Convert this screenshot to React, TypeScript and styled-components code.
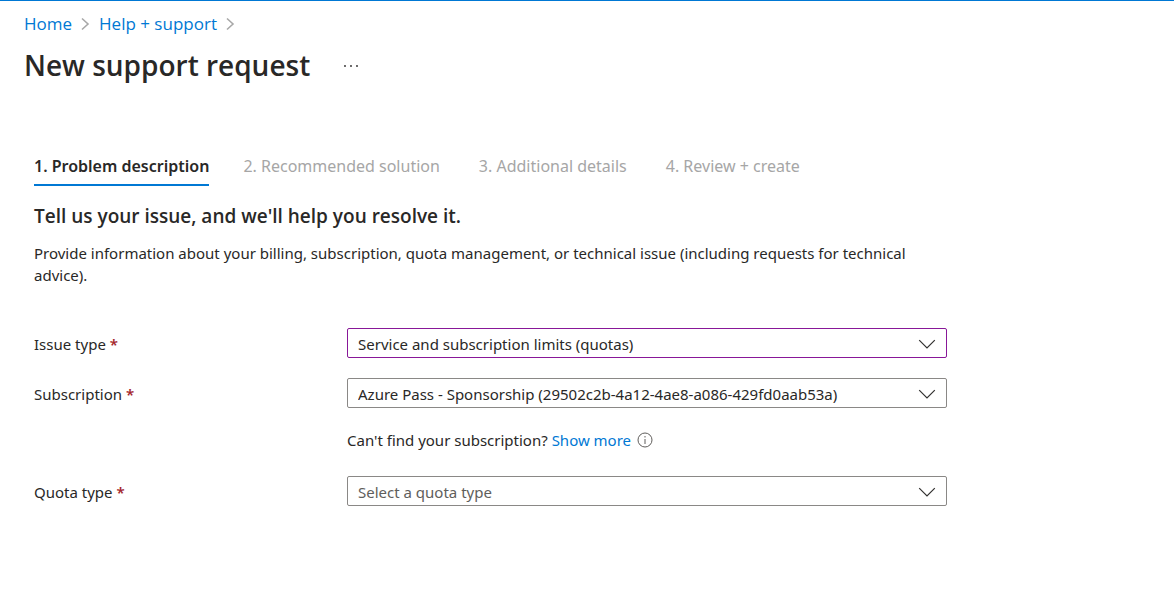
import React from "react";
import styled, { createGlobalStyle } from "styled-components";

const GlobalStyle = createGlobalStyle`
  * { box-sizing: border-box; }
  body {
    margin: 0;
    background: #ffffff;
    color: #292827;
    font-family: "Segoe UI", "Noto Sans", "Open Sans", sans-serif;
    font-size: 15px;
    line-height: 22px;
  }
`;

const Page = styled.div`
  min-height: 100vh;
  border-top: 1px solid #0078d4;
`;

const Header = styled.header`
  padding: 11px 24px 0;
`;

const Breadcrumb = styled.nav`
  display: flex;
  align-items: center;
  gap: 8px;
  font-family: "Segoe UI", "Open Sans", sans-serif;
  font-size: 17px;
  line-height: 24px;
`;

const Link = styled.a`
  color: #0078d4;
  text-decoration: none;
  &:hover { text-decoration: underline; }
`;

const TitleRow = styled.div`
  display: flex;
  align-items: center;
  gap: 33px;
  padding-top: 9px;
`;

const Title = styled.h1`
  margin: 0;
  font-family: "Segoe UI", "Open Sans", sans-serif;
  font-size: 28px;
  font-weight: 600;
  line-height: 40px;
`;

const MoreButton = styled.button`
  display: flex;
  padding: 2px 0 0;
  border: 0;
  background: none;
  color: #292827;
  cursor: pointer;
`;

const Main = styled.main`
  padding: 69px 34px 40px;
`;

const Tabs = styled.div`
  display: flex;
  gap: 29px;
`;

const Tab = styled.button<{ $active?: boolean }>`
  padding: ${(p) => (p.$active ? "0 0 6px" : "0 5px 6px")};
  border: 0;
  border-bottom: 2px solid ${(p) => (p.$active ? "#0078d4" : "transparent")};
  background: none;
  color: ${(p) => (p.$active ? "#292827" : "#a6a6a6")};
  font-family: inherit;
  font-size: 16px;
  font-weight: ${(p) => (p.$active ? 600 : 400)};
  line-height: 24px;
  white-space: nowrap;
`;

const Heading = styled.h2`
  margin: 18px 0 0;
  font-family: "Segoe UI", "Open Sans", sans-serif;
  font-size: 19px;
  font-weight: 600;
  line-height: 24px;
`;

const Intro = styled.p`
  max-width: 912px;
  margin: 14px 0 0;
`;

const Form = styled.form`
  display: grid;
  grid-template-columns: 313px minmax(0, 600px);
  row-gap: 20px;
  align-items: center;
  margin-top: 42px;
`;

const Label = styled.label`
  padding-top: 2px;
`;

const Required = styled.span`
  color: #a4262c;
  font-weight: 600;
`;

const SelectBox = styled.div`
  display: grid;
  align-items: center;
  > * { grid-area: 1 / 1; }
`;

const Select = styled.select<{ $edited?: boolean; $empty?: boolean }>`
  appearance: none;
  width: 100%;
  height: 30px;
  padding: 2px 40px 0 10px;
  border: 1px solid ${(p) => (p.$edited ? "#881798" : "#8a8886")};
  border-radius: 2px;
  background: #ffffff;
  color: ${(p) => (p.$empty ? "#605e5c" : "#292827")};
  font-family: inherit;
  font-size: 15px;
`;

const SelectArrow = styled.svg`
  justify-self: end;
  margin: 2px 11px 0 0;
  pointer-events: none;
`;

const Hint = styled.div`
  grid-column: 2;
  display: flex;
  align-items: center;
  gap: 6px;
  padding: 1px 0 5px;
`;

const Separator = () => (
  <svg width="11" height="14" viewBox="0 0 11 14" fill="none" stroke="#a8a8a8" strokeWidth="1.6" aria-hidden="true">
    <path d="M2 1.500 8 7l-6 5.500" />
  </svg>
);

type FieldProps = {
  id: string;
  label: string;
  value: string;
  edited?: boolean;
  empty?: boolean;
};

const Field = ({ id, label, value, edited, empty }: FieldProps) => (
  <>
    <Label htmlFor={id}>
      {label} <Required>*</Required>
    </Label>
    <SelectBox>
      <Select id={id} $edited={edited} $empty={empty} required>
        <option>{value}</option>
      </Select>
      <SelectArrow width="18" height="10" viewBox="0 0 18 10" fill="none" stroke="#323130" strokeWidth="1.2" aria-hidden="true">
        <path d="M1.2 1.2 9 9l7.800-7.800" />
      </SelectArrow>
    </SelectBox>
  </>
);

export default function App() {
  return (
    <Page>
      <GlobalStyle />
      <Header>
        <Breadcrumb aria-label="Breadcrumb">
          <Link href="#home">Home</Link>
          <Separator />
          <Link href="#help">Help + support</Link>
          <Separator />
        </Breadcrumb>
        <TitleRow>
          <Title>New support request</Title>
          <MoreButton type="button" aria-label="More actions">
            <svg width="16" height="4" viewBox="0 0 16 4" fill="currentColor">
              <circle cx="2" cy="2" r="0.900" />
              <circle cx="8" cy="2" r="0.900" />
              <circle cx="14" cy="2" r="0.900" />
            </svg>
          </MoreButton>
        </TitleRow>
      </Header>
      <Main>
        <Tabs role="tablist">
          <Tab type="button" role="tab" aria-selected $active>1. Problem description</Tab>
          <Tab type="button" role="tab">2. Recommended solution</Tab>
          <Tab type="button" role="tab">3. Additional details</Tab>
          <Tab type="button" role="tab">4. Review + create</Tab>
        </Tabs>
        <Heading>Tell us your issue, and we'll help you resolve it.</Heading>
        <Intro>
          Provide information about your billing, subscription, quota management, or technical issue (including requests for technical advice).
        </Intro>
        <Form>
          <Field id="issue-type" label="Issue type" value="Service and subscription limits (quotas)" edited />
          <Field id="subscription" label="Subscription" value="Azure Pass - Sponsorship (29502c2b-4a12-4ae8-a086-429fd0aab53a)" />
          <Hint>
            <span>
              Can't find your subscription? <Link href="#more">Show more</Link>
            </span>
            <svg width="16" height="16" viewBox="0 0 16 16" fill="none" stroke="#605e5c" role="img" aria-label="Information">
              <circle cx="8" cy="8" r="7" />
              <path d="M8 7v5M8 4v1.500" />
            </svg>
          </Hint>
          <Field id="quota-type" label="Quota type" value="Select a quota type" empty />
        </Form>
      </Main>
    </Page>
  );
}
